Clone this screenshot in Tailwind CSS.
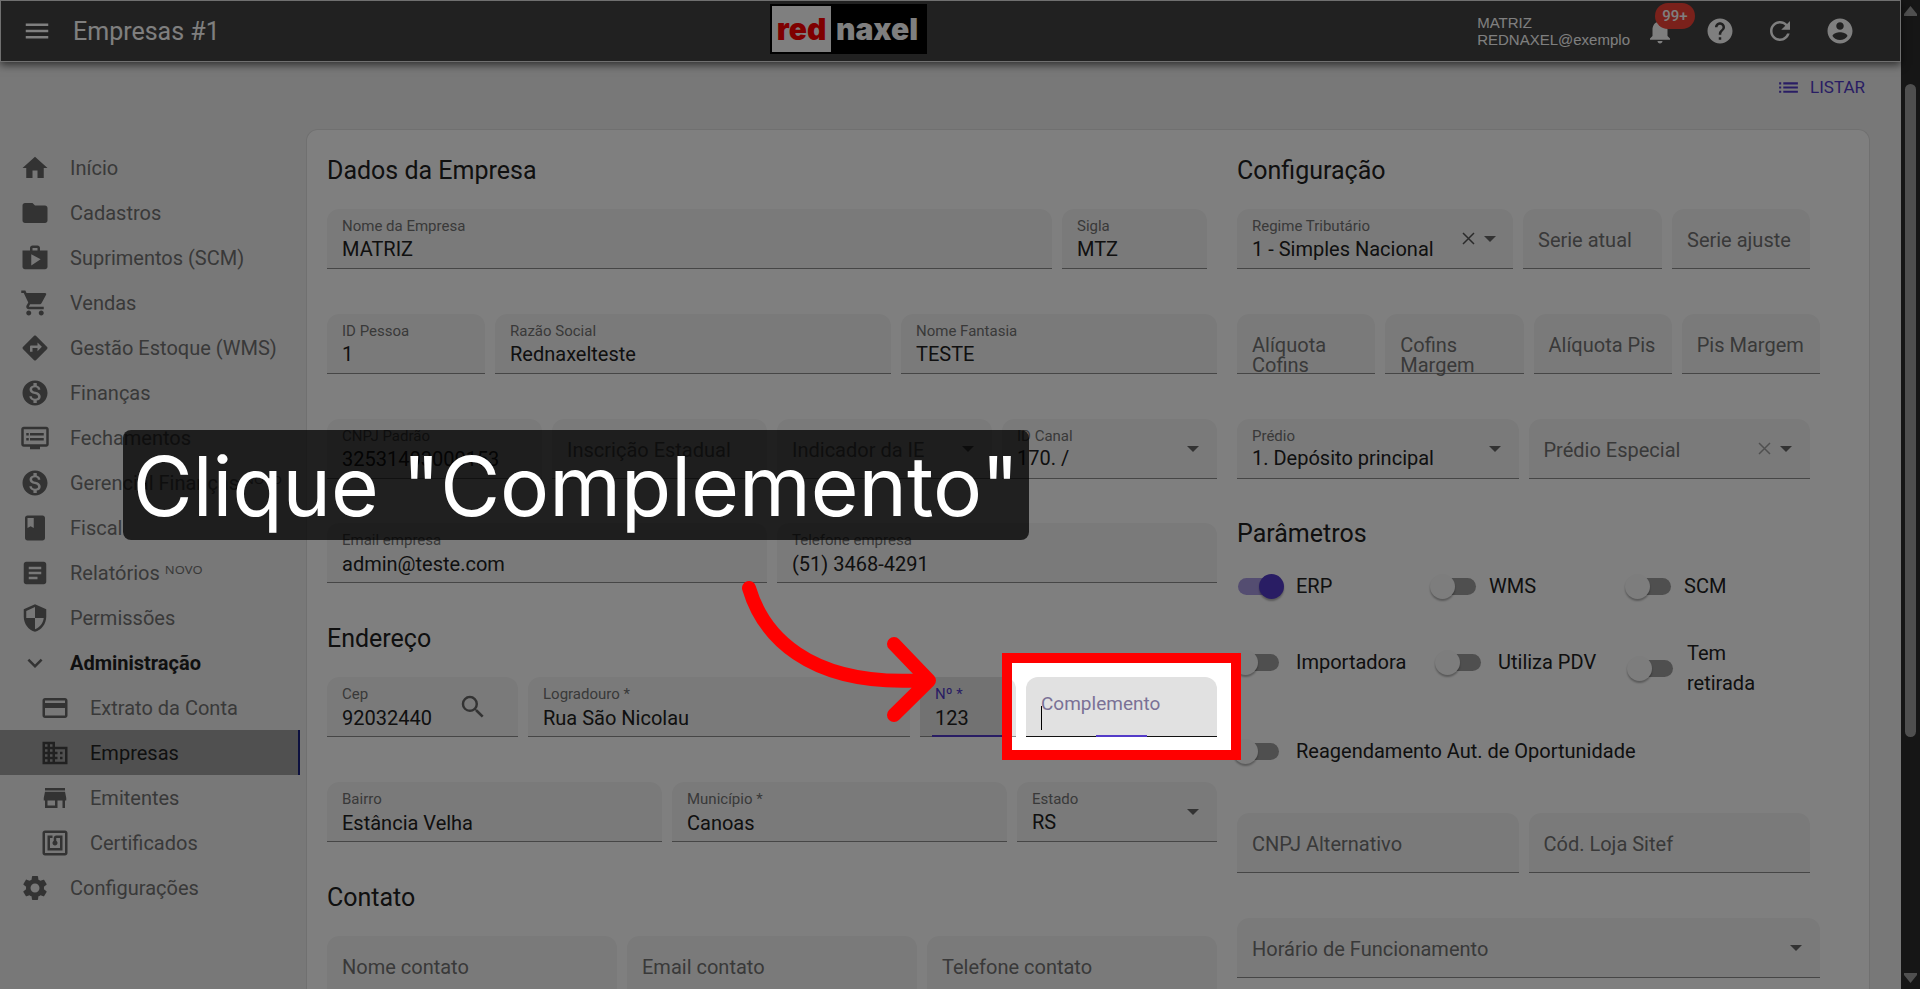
<!DOCTYPE html>
<html lang="pt-BR">
<head>
  <meta charset="UTF-8">
  <meta name="viewport" content="width=device-width, initial-scale=1.0">
  <title>Empresas #1</title>
  <script src="https://cdn.jsdelivr.net/npm/@tailwindcss/browser@4"></script>
</head>
<body class="relative flex h-screen overflow-hidden bg-[#f0f0f0] font-['Roboto','Noto_Sans',sans-serif] text-[20px] text-[#212121]">

  <div class="flex min-w-0 flex-1 flex-col">
    <!-- Barra superior -->
    <header class="relative flex h-[62px] shrink-0 items-center justify-between border border-[#e0e0e0] bg-[#424242] pl-[21px] pr-[30px] text-white shadow-[0_3px_8px_rgba(0,0,0,0.6)]">
      <div class="flex items-center gap-[21px]">
        <button type="button" aria-label="Menu" class="size-[30px]"><svg viewBox="0 0 24 24" fill="currentColor"><path d="M3 18h18v-2H3v2zm0-5h18v-2H3v2zm0-7v2h18V6H3z"/></svg></button>
        <h1 class="pt-[2px] text-[25px] leading-8">Empresas #1</h1>
      </div>
      <a href="#" class="mt-[3px] flex h-[50px] w-[157px] items-center self-start bg-black pl-[2px] font-['Inter',sans-serif] text-[30px] leading-none font-black">
        <span class="flex h-[46px] w-[59px] items-center justify-center bg-white text-[#ff0000]">red</span>
        <span class="pl-[5px]">naxel</span>
      </a>
      <div class="flex items-center justify-end">
        <p class="font-['Liberation_Sans',sans-serif] text-[15px] leading-[17px]">MATRIZ<br>REDNAXEL@exemplo</p>
        <button type="button" aria-label="Notificações" class="relative flex w-[60px] justify-center">
          <svg class="size-[30px]" viewBox="0 0 24 24" fill="currentColor"><path d="M12 22c1.1 0 2-.9 2-2h-4c0 1.1.89 2 2 2zm6-6v-5c0-3.07-1.64-5.64-4.5-6.32V4c0-.83-.67-1.5-1.5-1.5s-1.5.67-1.5 1.5v.68C7.63 5.36 6 7.92 6 11v5l-2 2v1h16v-1l-2-2z"/></svg>
          <span class="absolute -top-[13px] left-[25px] flex h-[26px] w-10 items-center justify-center rounded-full bg-[#f44336] text-[15px] font-medium">99+</span>
        </button>
        <button type="button" aria-label="Ajuda" class="flex w-[60px] justify-center"><svg class="size-[30px]" viewBox="0 0 24 24" fill="currentColor"><path d="M12 2C6.48 2 2 6.48 2 12s4.48 10 10 10 10-4.48 10-10S17.52 2 12 2zm1 17h-2v-2h2v2zm2.07-7.75l-.9.92C13.45 12.9 13 13.5 13 15h-2v-.5c0-1.1.45-2.1 1.17-2.83l1.24-1.26c.37-.36.59-.86.59-1.41 0-1.1-.9-2-2-2s-2 .9-2 2H8c0-2.21 1.79-4 4-4s4 1.79 4 4c0 .88-.36 1.68-.93 2.25z"/></svg></button>
        <button type="button" aria-label="Atualizar" class="flex w-[60px] justify-center"><svg class="size-[30px]" viewBox="0 0 24 24" fill="currentColor"><path d="M17.65 6.35C16.2 4.9 14.21 4 12 4c-4.42 0-7.99 3.58-7.99 8s3.57 8 7.99 8c3.73 0 6.84-2.55 7.73-6h-2.08c-.82 2.33-3.04 4-5.65 4-3.31 0-6-2.69-6-6s2.69-6 6-6c1.66 0 3.14.69 4.22 1.78L13 11h7V4l-2.35 2.35z"/></svg></button>
        <button type="button" aria-label="Conta" class="flex w-[60px] justify-center"><svg class="size-[30px]" viewBox="0 0 24 24" fill="currentColor"><path fill-rule="evenodd" d="M12 2C6.48 2 2 6.48 2 12s4.48 10 10 10 10-4.48 10-10S17.52 2 12 2zm0 3c1.66 0 3 1.34 3 3s-1.34 3-3 3-3-1.34-3-3 1.34-3 3-3zm0 14.2c-2.5 0-4.71-1.28-6-3.22.03-1.99 4-3.08 6-3.08 1.99 0 5.97 1.09 6 3.08-1.29 1.94-3.5 3.22-6 3.22z"/></svg></button>
      </div>
    </header>

    <div class="flex h-[67px] shrink-0 items-start justify-end pr-9">
      <a href="#" class="flex h-[51px] items-center gap-[9px] text-[17px] text-[#533bc8]">
        <svg class="size-[25px]" viewBox="0 0 24 24" fill="currentColor"><path d="M3 13h2v-2H3v2zm0 4h2v-2H3v2zm0-8h2V7H3v2zm4 4h14v-2H7v2zm0 4h14v-2H7v2zM7 7v2h14V7H7z"/></svg>
        LISTAR
      </a>
    </div>

    <div class="flex min-h-0 flex-1">
      <!-- Menu lateral -->
      <nav class="w-[300px] shrink-0 pt-4 text-[#737373] [&_a]:flex [&_a]:h-[45px] [&_a]:items-center [&_a]:gap-5 [&_a]:whitespace-nowrap [&_svg]:size-[30px] [&_svg]:shrink-0 [&_svg]:fill-[#666]">
        <a href="#" class="pl-5"><svg viewBox="0 0 24 24"><path d="M10 20v-6h4v6h5v-8h3L12 3 2 12h3v8z"/></svg>Início</a>
        <a href="#" class="pl-5"><svg viewBox="0 0 24 24"><path d="M10 4H4c-1.1 0-1.99.9-1.99 2L2 18c0 1.1.9 2 2 2h16c1.1 0 2-.9 2-2V8c0-1.1-.9-2-2-2h-8l-2-2z"/></svg>Cadastros</a>
        <a href="#" class="pl-5"><svg viewBox="0 0 24 24"><path d="M16 6V4c0-1.11-.89-2-2-2h-4c-1.11 0-2 .89-2 2v2H2v13c0 1.11.89 2 2 2h16c1.11 0 2-.89 2-2V6h-6zm-6-2h4v2h-4V4zM9 18V9l7.5 4L9 18z"/></svg>Suprimentos (SCM)</a>
        <a href="#" class="pl-5"><svg viewBox="0 0 24 24"><path d="M7 18c-1.1 0-1.99.9-1.99 2S5.9 22 7 22s2-.9 2-2-.9-2-2-2zM1 2v2h2l3.6 7.59-1.35 2.45c-.16.28-.25.61-.25.96 0 1.1.9 2 2 2h12v-2H7.42c-.14 0-.25-.11-.25-.25l.03-.12.9-1.63h7.45c.75 0 1.41-.41 1.75-1.03l3.58-6.49A1.003 1.003 0 0 0 20 4H5.21l-.94-2H1zm16 16c-1.1 0-1.99.9-1.99 2s.89 2 1.99 2 2-.9 2-2-.9-2-2-2z"/></svg>Vendas</a>
        <a href="#" class="pl-5"><svg viewBox="0 0 24 24"><path d="M21.71 11.29l-9-9c-.39-.39-1.02-.39-1.41 0l-9 9c-.39.39-.39 1.02 0 1.41l9 9c.39.39 1.02.39 1.41 0l9-9c.39-.38.39-1.01 0-1.41zM14 14.5V12h-4v3H8v-4c0-.55.45-1 1-1h5V7.5l3.5 3.5-3.5 3.5z"/></svg>Gestão Estoque (WMS)</a>
        <a href="#" class="pl-5"><svg viewBox="0 0 24 24"><path d="M12 2C6.48 2 2 6.48 2 12s4.48 10 10 10 10-4.48 10-10S17.52 2 12 2zm1.41 16.09V20h-2.67v-1.93c-1.71-.36-3.16-1.46-3.27-3.4h1.96c.1 1.05.82 1.87 2.65 1.87 1.96 0 2.4-.98 2.4-1.59 0-.83-.44-1.61-2.67-2.14-2.48-.6-4.18-1.62-4.18-3.67 0-1.72 1.39-2.84 3.11-3.21V4h2.67v1.95c1.86.45 2.79 1.86 2.85 3.39H14.3c-.05-1.11-.64-1.87-2.22-1.87-1.5 0-2.4.68-2.4 1.64 0 .84.65 1.39 2.67 1.91s4.18 1.39 4.18 3.91c-.01 1.83-1.38 2.83-3.12 3.16z"/></svg>Finanças</a>
        <a href="#" class="pl-5"><svg viewBox="0 0 24 24"><path d="M21 3H3c-1.1 0-2 .9-2 2v12c0 1.1.9 2 2 2h5v2h8v-2h5c1.1 0 1.99-.9 1.99-2L23 5c0-1.1-.9-2-2-2zm0 14H3V5h18v12zm-2-9H8v2h11V8zm0 4H8v2h11v-2zM7 8H5v2h2V8zm0 4H5v2h2v-2z"/></svg>Fechamentos</a>
        <a href="#" class="pl-5"><svg viewBox="0 0 24 24"><path d="M12 2C6.48 2 2 6.48 2 12s4.48 10 10 10 10-4.48 10-10S17.52 2 12 2zm1.41 16.09V20h-2.67v-1.93c-1.71-.36-3.16-1.46-3.27-3.4h1.96c.1 1.05.82 1.87 2.65 1.87 1.96 0 2.4-.98 2.4-1.59 0-.83-.44-1.61-2.67-2.14-2.48-.6-4.18-1.62-4.18-3.67 0-1.72 1.39-2.84 3.11-3.21V4h2.67v1.95c1.86.45 2.79 1.86 2.85 3.39H14.3c-.05-1.11-.64-1.87-2.22-1.87-1.5 0-2.4.68-2.4 1.64 0 .84.65 1.39 2.67 1.91s4.18 1.39 4.18 3.91c-.01 1.83-1.38 2.83-3.12 3.16z"/></svg>Gerencial Finanças ᴺᴼⱽᴼ</a>
        <a href="#" class="pl-5"><svg viewBox="0 0 24 24"><path d="M18 2H6c-1.1 0-2 .9-2 2v16c0 1.1.9 2 2 2h12c1.1 0 2-.9 2-2V4c0-1.1-.9-2-2-2zM6 4h5v8l-2.5-1.5L6 12V4z"/></svg>Fiscal</a>
        <a href="#" class="pl-5"><svg viewBox="0 0 24 24"><path d="M19 3H5c-1.1 0-2 .9-2 2v14c0 1.1.9 2 2 2h14c1.1 0 2-.9 2-2V5c0-1.1-.9-2-2-2zm-5 14H7v-2h7v2zm3-4H7v-2h10v2zm0-4H7V7h10v2z"/></svg>Relatórios ᴺᴼⱽᴼ</a>
        <a href="#" class="pl-5"><svg viewBox="0 0 24 24"><path d="M12 1L3 5v6c0 5.55 3.84 10.74 9 12 5.16-1.26 9-6.45 9-12V5l-9-4zm0 10.99h7c-.53 4.12-3.28 7.79-7 8.94V12H5V6.3l7-3.11v8.8z"/></svg>Permissões</a>
        <a href="#" class="pl-5 font-bold text-[#212121]"><svg viewBox="0 0 24 24"><path d="M16.59 8.59L12 13.17 7.41 8.59 6 10l6 6 6-6z"/></svg>Administração</a>
        <a href="#" class="pl-10"><svg viewBox="0 0 24 24"><path d="M20 4H4c-1.11 0-1.99.89-1.99 2L2 18c0 1.11.89 2 2 2h16c1.11 0 2-.89 2-2V6c0-1.11-.89-2-2-2zm0 14H4v-6h16v6zm0-10H4V6h16v2z"/></svg>Extrato da Conta</a>
        <a href="#" aria-current="page" class="border-r-2 border-[#1a237e] bg-[#a0a0a0] pl-10 text-[#212121] [&>svg]:fill-[#424242]"><svg viewBox="0 0 24 24"><path d="M12 7V3H2v18h20V7H12zM6 19H4v-2h2v2zm0-4H4v-2h2v2zm0-4H4V9h2v2zm0-4H4V5h2v2zm4 12H8v-2h2v2zm0-4H8v-2h2v2zm0-4H8V9h2v2zm0-4H8V5h2v2zm10 12h-8v-2h2v-2h-2v-2h2v-2h-2V9h8v10zm-2-8h-2v2h2v-2zm0 4h-2v2h2v-2z"/></svg>Empresas</a>
        <a href="#" class="pl-10"><svg viewBox="0 0 24 24"><path d="M20 4H4v2h16V4zm1 10v-2l-1-5H4l-1 5v2h1v6h10v-6h4v6h2v-6h1zm-9 4H6v-4h6v4z"/></svg>Emitentes</a>
        <a href="#" class="pl-10"><svg viewBox="0 0 24 24"><path d="M20 2H4c-1.1 0-2 .9-2 2v16c0 1.1.9 2 2 2h16c1.1 0 2-.9 2-2V4c0-1.1-.9-2-2-2zm0 18H4V4h16v16zM18 6h-5c-1.1 0-2 .9-2 2v2.28c-.6.35-1 .98-1 1.72 0 1.1.9 2 2 2s2-.9 2-2c0-.74-.4-1.38-1-1.72V8h3v8H8V8h2V6H6v12h12V6z"/></svg>Certificados</a>
        <a href="#" class="pl-5"><svg viewBox="0 0 24 24"><path d="M19.14 12.94c.04-.3.06-.61.06-.94 0-.32-.02-.64-.07-.94l2.03-1.58c.18-.14.23-.41.12-.61l-1.92-3.32c-.12-.22-.37-.29-.59-.22l-2.39.96c-.5-.38-1.03-.7-1.62-.94l-.36-2.54c-.04-.24-.24-.41-.48-.41h-3.84c-.24 0-.43.17-.47.41l-.36 2.54c-.59.24-1.13.57-1.62.94l-2.39-.96c-.22-.08-.47 0-.59.22L2.74 8.87c-.12.21-.08.47.12.61l2.03 1.58c-.05.3-.09.63-.09.94s.02.64.07.94l-2.03 1.58c-.18.14-.23.41-.12.61l1.92 3.32c.12.22.37.29.59.22l2.39-.96c.5.38 1.03.7 1.62.94l.36 2.54c.05.24.24.41.48.41h3.84c.24 0 .44-.17.47-.41l.36-2.54c.59-.24 1.13-.56 1.62-.94l2.39.96c.22.08.47 0 .59-.22l1.92-3.32c.12-.22.07-.47-.12-.61l-2.01-1.58zM12 15.6c-1.98 0-3.6-1.62-3.6-3.6s1.62-3.6 3.6-3.6 3.6 1.62 3.6 3.6-1.62 3.6-3.6 3.6z"/></svg>Configurações</a>
      </nav>

      <!-- Formulário -->
      <form class="mr-[31px] ml-[6px] grid min-w-0 flex-1 grid-cols-[890fr_583fr] gap-5 rounded-t-xl border border-b-0 border-[#e0e0e0] bg-white pt-[25px] pr-[49px] pl-5">
        <div class="flex min-w-0 flex-col">
          <h2 class="text-[25px] leading-8">Dados da Empresa</h2>
          <div class="mt-[22px] mr-[10px] grid grid-cols-[725fr_145fr] gap-[10px] *:h-[60px] *:min-w-0 *:rounded-t-xl *:border-b *:border-[#8c8c8c] *:bg-[#f5f5f5] *:px-[15px] *:pt-2">
            <div>
              <label for="nome" class="block text-[15px] leading-[18px] text-[#737373]">Nome da Empresa</label>
              <input id="nome" type="text" value="MATRIZ" class="block h-7 w-full outline-none">
            </div>
            <div>
              <label for="sigla" class="block text-[15px] leading-[18px] text-[#737373]">Sigla</label>
              <input id="sigla" type="text" value="MTZ" class="block h-7 w-full outline-none">
            </div>
          </div>
          <div class="mt-[45px] grid grid-cols-[158fr_396fr_316fr] gap-[10px] *:h-[60px] *:min-w-0 *:rounded-t-xl *:border-b *:border-[#8c8c8c] *:bg-[#f5f5f5] *:px-[15px] *:pt-2">
            <div>
              <label for="pessoa" class="block text-[15px] leading-[18px] text-[#737373]">ID Pessoa</label>
              <input id="pessoa" type="text" value="1" class="block h-7 w-full outline-none">
            </div>
            <div>
              <label for="razao" class="block text-[15px] leading-[18px] text-[#737373]">Razão Social</label>
              <input id="razao" type="text" value="Rednaxelteste" class="block h-7 w-full outline-none">
            </div>
            <div>
              <label for="fantasia" class="block text-[15px] leading-[18px] text-[#737373]">Nome Fantasia</label>
              <input id="fantasia" type="text" value="TESTE" class="block h-7 w-full outline-none">
            </div>
          </div>
          <div class="mt-[45px] grid grid-cols-4 gap-[10px] *:relative *:h-[60px] *:min-w-0 *:rounded-t-xl *:border-b *:border-[#8c8c8c] *:bg-[#f5f5f5] *:px-[15px]">
            <div class="pt-2">
              <label for="cnpj" class="block text-[15px] leading-[18px] text-[#737373]">CNPJ Padrão</label>
              <input id="cnpj" type="text" value="32531403000153" class="block h-7 w-full outline-none">
            </div>
            <div class="pt-[21px]">
              <label for="ie" class="block leading-5 text-[#737373]">Inscrição Estadual</label>
              <input id="ie" type="text" class="absolute inset-0 px-[15px] outline-none">
            </div>
            <div class="pt-[21px]">
              <label for="indicador" class="block leading-5 text-[#737373]">Indicador da IE</label>
              <select id="indicador" class="absolute inset-0 w-full appearance-none outline-none"><option></option></select>
              <svg class="pointer-events-none absolute top-[27px] right-[18px] h-[6px] w-3 fill-[#666]" viewBox="0 0 12 6"><path d="M0 0h12L6 6z"/></svg>
            </div>
            <div class="pt-2">
              <label for="canal" class="block text-[15px] leading-[18px] text-[#737373]">ID Canal</label>
              <select id="canal" class="block h-[26px] w-full appearance-none leading-[26px] outline-none"><option>170. /</option></select>
              <svg class="pointer-events-none absolute top-[27px] right-[18px] h-[6px] w-3 fill-[#666]" viewBox="0 0 12 6"><path d="M0 0h12L6 6z"/></svg>
            </div>
          </div>
          <div class="mt-11 grid grid-cols-2 gap-[10px] *:h-[60px] *:min-w-0 *:rounded-t-xl *:border-b *:border-[#8c8c8c] *:bg-[#f5f5f5] *:px-[15px] *:pt-2">
            <div>
              <label for="email" class="block text-[15px] leading-[18px] text-[#737373]">Email empresa</label>
              <input id="email" type="email" value="admin@teste.com" class="block h-[30px] w-full outline-none">
            </div>
            <div>
              <label for="telefone" class="block text-[15px] leading-[18px] text-[#737373]">Telefone empresa</label>
              <input id="telefone" type="tel" value="(51) 3468-4291" class="block h-[30px] w-full outline-none">
            </div>
          </div>

          <h2 class="mt-10 text-[25px] leading-8">Endereço</h2>
          <div class="mt-[22px] grid grid-cols-[191fr_382fr_96fr_191fr] gap-[10px] *:relative *:h-[60px] *:min-w-0 *:rounded-t-xl *:border-b *:px-[15px] *:pt-2">
            <div class="flex items-start justify-between border-[#8c8c8c] bg-[#f5f5f5]">
              <div class="min-w-0 flex-1">
                <label for="cep" class="block text-[15px] leading-[18px] text-[#737373]">Cep</label>
                <input id="cep" type="text" value="92032440" class="block h-[30px] w-full outline-none">
              </div>
              <button type="button" aria-label="Buscar CEP" class="mt-[7px] mr-[15px] size-[30px]"><svg viewBox="0 0 24 24" fill="#666"><path d="M15.5 14h-.79l-.28-.27A6.471 6.471 0 0 0 16 9.5 6.5 6.5 0 1 0 9.5 16c1.61 0 3.09-.59 4.23-1.57l.27.28v.79l5 4.99L20.49 19l-4.99-5zm-6 0C7.01 14 5 11.99 5 9.5S7.01 5 9.5 5 14 7.01 14 9.5 11.99 14 9.5 14z"/></svg></button>
            </div>
            <div class="border-[#8c8c8c] bg-[#f5f5f5]">
              <label for="logradouro" class="block text-[15px] leading-[18px] text-[#737373]">Logradouro *</label>
              <input id="logradouro" type="text" value="Rua São Nicolau" class="block h-[30px] w-full outline-none">
            </div>
            <div class="border-[#8c8c8c] bg-[#e4e4e4]">
              <label for="numero" class="block text-[15px] leading-[18px] text-[#533bc8]">Nº *</label>
              <input id="numero" type="text" value="123" class="block h-[30px] w-full outline-none">
              <span class="absolute right-3 -bottom-px left-3 h-[2px] bg-[#533bc8]"></span>
            </div>
            <div class="border-[#111] bg-[#e1e1e1]">
              <label for="complemento" class="mt-[9px] block text-[19px] leading-5 text-[#7a7196]">Complemento</label>
              <input id="complemento" type="text" class="absolute inset-0 px-[15px] outline-none">
              <!-- cursor de texto e linha de foco -->
              <span class="absolute top-[29px] left-[15px] h-6 w-px bg-black"></span>
              <span class="absolute -bottom-px left-[70px] h-[2px] w-[51px] bg-[#533bc8]"></span>
              <!-- destaque: moldura vermelha e sombra sobre o resto da página -->
              <span class="pointer-events-none absolute -inset-6 z-10 border-[10px] border-[#ff0000] shadow-[0_0_0_2400px_rgba(0,0,0,0.5)]"></span>
            </div>
          </div>
          <div class="mt-[45px] grid grid-cols-[335fr_335fr_200fr] gap-[10px] *:relative *:h-[60px] *:min-w-0 *:rounded-t-xl *:border-b *:border-[#8c8c8c] *:bg-[#f5f5f5] *:px-[15px] *:pt-2">
            <div>
              <label for="bairro" class="block text-[15px] leading-[18px] text-[#737373]">Bairro</label>
              <input id="bairro" type="text" value="Estância Velha" class="block h-[30px] w-full outline-none">
            </div>
            <div>
              <label for="municipio" class="block text-[15px] leading-[18px] text-[#737373]">Município *</label>
              <input id="municipio" type="text" value="Canoas" class="block h-[30px] w-full outline-none">
            </div>
            <div>
              <label for="estado" class="block text-[15px] leading-[18px] text-[#737373]">Estado</label>
              <select id="estado" class="block h-7 w-full appearance-none leading-7 outline-none"><option>RS</option></select>
              <svg class="pointer-events-none absolute top-[27px] right-[18px] h-[6px] w-3 fill-[#666]" viewBox="0 0 12 6"><path d="M0 0h12L6 6z"/></svg>
            </div>
          </div>

          <h2 class="mt-10 text-[25px] leading-8">Contato</h2>
          <div class="mt-[22px] grid grid-cols-3 gap-[10px] *:relative *:h-[60px] *:min-w-0 *:rounded-t-xl *:border-b *:border-[#8c8c8c] *:bg-[#f5f5f5] *:px-[15px] *:pt-[21px]">
            <div>
              <label for="contato-nome" class="block leading-5 text-[#737373]">Nome contato</label>
              <input id="contato-nome" type="text" class="absolute inset-0 px-[15px] outline-none">
            </div>
            <div>
              <label for="contato-email" class="block leading-5 text-[#737373]">Email contato</label>
              <input id="contato-email" type="email" class="absolute inset-0 px-[15px] outline-none">
            </div>
            <div>
              <label for="contato-telefone" class="block leading-5 text-[#737373]">Telefone contato</label>
              <input id="contato-telefone" type="tel" class="absolute inset-0 px-[15px] outline-none">
            </div>
          </div>
        </div>

        <div class="flex min-w-0 flex-col">
          <h2 class="text-[25px] leading-8">Configuração</h2>
          <div class="mt-[22px] mr-[10px] grid grid-cols-[276fr_139fr_138fr] gap-[10px] *:relative *:h-[60px] *:min-w-0 *:rounded-t-xl *:border-b *:border-[#8c8c8c] *:bg-[#f5f5f5] *:px-[15px]">
            <div class="pt-2">
              <label for="regime" class="block text-[15px] leading-[18px] text-[#737373]">Regime Tributário</label>
              <select id="regime" class="block h-7 w-full appearance-none leading-7 outline-none"><option>1 - Simples Nacional</option></select>
              <div class="pointer-events-none absolute top-[23px] right-[17px] flex items-center gap-[9px]">
                <svg class="size-[13px] stroke-[#555]" viewBox="0 0 13 13" stroke-width="1.5"><path d="M1 1l11 11M12 1L1 12"/></svg>
                <svg class="h-[6px] w-3 fill-[#666]" viewBox="0 0 12 6"><path d="M0 0h12L6 6z"/></svg>
              </div>
            </div>
            <div class="pt-[21px]">
              <label for="serie-atual" class="block leading-5 text-[#737373]">Serie atual</label>
              <input id="serie-atual" type="text" class="absolute inset-0 w-full px-[15px] outline-none">
            </div>
            <div class="pt-[21px]">
              <label for="serie-ajuste" class="block leading-5 whitespace-nowrap text-[#737373]">Serie ajuste</label>
              <input id="serie-ajuste" type="text" class="absolute inset-0 w-full px-[15px] outline-none">
            </div>
          </div>
          <div class="mt-[45px] grid grid-cols-4 gap-[10px] *:relative *:h-[60px] *:min-w-0 *:rounded-t-xl *:border-b *:border-[#8c8c8c] *:bg-[#f5f5f5] *:pt-[21px] *:pl-[15px]">
            <div>
              <label for="aliq-cofins" class="block leading-5 text-[#737373]">Alíquota Cofins</label>
              <input id="aliq-cofins" type="text" class="absolute inset-0 w-full px-[15px] outline-none">
            </div>
            <div>
              <label for="cofins-margem" class="block leading-5 text-[#737373]">Cofins Margem</label>
              <input id="cofins-margem" type="text" class="absolute inset-0 w-full px-[15px] outline-none">
            </div>
            <div>
              <label for="aliq-pis" class="block leading-5 whitespace-nowrap text-[#737373]">Alíquota Pis</label>
              <input id="aliq-pis" type="text" class="absolute inset-0 w-full px-[15px] outline-none">
            </div>
            <div>
              <label for="pis-margem" class="block leading-5 whitespace-nowrap text-[#737373]">Pis Margem</label>
              <input id="pis-margem" type="text" class="absolute inset-0 w-full px-[15px] outline-none">
            </div>
          </div>
          <div class="mt-[45px] mr-[10px] grid grid-cols-2 gap-[10px] *:relative *:h-[60px] *:min-w-0 *:rounded-t-xl *:border-b *:border-[#8c8c8c] *:bg-[#f5f5f5] *:px-[15px]">
            <div class="pt-2">
              <label for="predio" class="block text-[15px] leading-[18px] text-[#737373]">Prédio</label>
              <select id="predio" class="block h-[26px] w-full appearance-none leading-[26px] outline-none"><option>1. Depósito principal</option></select>
              <svg class="pointer-events-none absolute top-[27px] right-[18px] h-[6px] w-3 fill-[#666]" viewBox="0 0 12 6"><path d="M0 0h12L6 6z"/></svg>
            </div>
            <div class="pt-[21px]">
              <label for="predio-especial" class="block leading-5 text-[#737373]">Prédio Especial</label>
              <select id="predio-especial" class="absolute inset-0 w-full appearance-none outline-none"><option></option></select>
              <div class="pointer-events-none absolute top-[23px] right-[18px] flex items-center gap-[9px]">
                <svg class="size-[13px] stroke-[#a0a0a0]" viewBox="0 0 13 13" stroke-width="1.5"><path d="M1 1l11 11M12 1L1 12"/></svg>
                <svg class="h-[6px] w-3 fill-[#666]" viewBox="0 0 12 6"><path d="M0 0h12L6 6z"/></svg>
              </div>
            </div>
          </div>

          <h2 class="mt-[39px] text-[25px] leading-8">Parâmetros</h2>
          <!-- a trilha da chave é o ::before e o botão é o ::after -->
          <div class="[&_input]:relative [&_input]:h-[25px] [&_input]:w-[47px] [&_input]:shrink-0 [&_input]:appearance-none [&_input]:before:absolute [&_input]:before:inset-x-px [&_input]:before:inset-y-[4px] [&_input]:before:rounded-full [&_input]:before:bg-[#9e9e9e] [&_input]:after:absolute [&_input]:after:top-0 [&_input]:after:left-0 [&_input]:after:size-[25px] [&_input]:after:rounded-full [&_input]:after:bg-[#fafafa] [&_input]:after:shadow-[0_2px_2px_rgba(0,0,0,0.3)] [&_input]:checked:before:bg-[#a99be3] [&_input]:checked:after:left-[22px] [&_input]:checked:after:bg-[#533bc8] [&_label]:flex [&_label]:items-center [&_label]:gap-3 [&_label]:leading-[30px]">
            <div class="mt-[21px] grid grid-cols-[193fr_195fr_195fr]">
              <label><input type="checkbox" checked>ERP</label>
              <label><input type="checkbox">WMS</label>
              <label><input type="checkbox">SCM</label>
            </div>
            <div class="-ml-1 mt-[33px] grid grid-cols-[202fr_192fr_193fr] items-start">
              <label class="h-14"><input type="checkbox"><span class="pl-1">Importadora</span></label>
              <label class="h-14"><input type="checkbox"><span class="pl-1">Utiliza PDV</span></label>
              <label class="mt-1 w-[140px]"><input type="checkbox"><span class="pl-px">Tem retirada</span></label>
            </div>
            <div class="mt-[38px] -ml-1">
              <label><input type="checkbox"><span class="pl-1">Reagendamento Aut. de Oportunidade</span></label>
            </div>
          </div>

          <div class="mt-[47px] mr-[10px] grid grid-cols-2 gap-[10px] *:relative *:h-[60px] *:min-w-0 *:rounded-t-xl *:border-b *:border-[#8c8c8c] *:bg-[#f5f5f5] *:px-[15px] *:pt-[21px]">
            <div>
              <label for="cnpj-alt" class="block leading-5 text-[#737373]">CNPJ Alternativo</label>
              <input id="cnpj-alt" type="text" class="absolute inset-0 w-full px-[15px] outline-none">
            </div>
            <div>
              <label for="sitef" class="block leading-5 text-[#737373]">Cód. Loja Sitef</label>
              <input id="sitef" type="text" class="absolute inset-0 w-full px-[15px] outline-none">
            </div>
          </div>
          <div class="relative mt-[45px] h-[60px] rounded-t-xl border-b border-[#8c8c8c] bg-[#f5f5f5] px-[15px] pt-[21px]">
            <label for="horario" class="block leading-5 text-[#737373]">Horário de Funcionamento</label>
            <select id="horario" class="absolute inset-0 w-full appearance-none outline-none"><option></option></select>
            <svg class="pointer-events-none absolute top-[27px] right-[18px] h-[6px] w-3 fill-[#666]" viewBox="0 0 12 6"><path d="M0 0h12L6 6z"/></svg>
          </div>
        </div>
      </form>
    </div>
  </div>

  <!-- Barra de rolagem -->
  <div class="flex w-[19px] shrink-0 flex-col items-center justify-between bg-[#2c2c2c] py-[6px]">
    <svg class="h-[10px] w-[13px] fill-[#9f9f9f]" viewBox="0 0 13 10"><path d="M6.5 0L13 8v2H0V8z"/></svg>
    <div class="mt-[68px] h-[653px] w-[11px] rounded-full bg-[#9f9f9f]"></div>
    <svg class="mt-auto h-[10px] w-[13px] fill-[#9f9f9f]" viewBox="0 0 13 10"><path d="M6.5 10L13 2V0H0v2z"/></svg>
  </div>

  <!-- Instrução do passo -->
  <div class="absolute top-[430px] left-[123px] z-20 flex h-[110px] w-[906px] items-center justify-center rounded-lg bg-black/75 pt-1 font-['Inter',sans-serif] text-[82px] leading-none whitespace-nowrap text-white">Clique "Complemento"</div>
  <svg class="absolute top-[570px] left-[730px] z-20 h-[160px] w-[220px]" viewBox="730 570 220 160" fill="none" stroke="#ff0000" stroke-width="14" stroke-linecap="round" stroke-linejoin="round"><path d="M749 588C762 632 805 688 925 680M894 644l35 36.500-35 34.500"/></svg>
</body>
</html>
